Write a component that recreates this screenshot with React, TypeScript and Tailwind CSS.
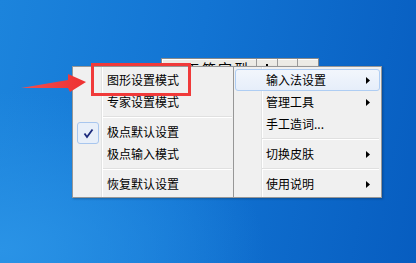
import React from "react";

type Item = { label: string; sub?: boolean; checked?: boolean; active?: boolean } | "sep";

const leftItems: Item[] = [
  { label: "图形设置模式" },
  { label: "专家设置模式" },
  "sep",
  { label: "极点默认设置", checked: true },
  { label: "极点输入模式" },
  "sep",
  { label: "恢复默认设置" },
];

const rightItems: Item[] = [
  { label: "输入法设置", sub: true, active: true },
  { label: "管理工具", sub: true },
  { label: "手工造词..." },
  "sep",
  { label: "切换皮肤", sub: true },
  "sep",
  { label: "使用说明", sub: true },
];

function Arrow() {
  return (
    <svg width="4" height="7" viewBox="0 0 4 7" className="shrink-0">
      <path d="M0 0 L4 3.5 L0 7 Z" fill="#000" />
    </svg>
  );
}

function Check() {
  return (
    <div className="absolute left-[2px] top-0 flex h-[22px] w-[22px] items-center justify-center rounded-[3px] border border-[#a8c6ee] bg-[#e8eff9]">
      <svg width="11" height="11" viewBox="0 0 11 11">
        <path d="M1.5 5.5 L4 9 L9.5 1.5" fill="none" stroke="#1c2a7c" strokeWidth="1.8" />
      </svg>
    </div>
  );
}

function Menu({ items, textPad, sepPad, gutter }: { items: Item[]; textPad: string; sepPad: string; gutter: string }) {
  return (
    <div className={`flex flex-col border border-[#979797] px-px py-[2px] ${gutter}`}>
      {items.map((it, i) =>
        it === "sep" ? (
          <div key={i} className={`flex h-[8px] items-center ${sepPad}`}>
            <div className="h-[2px] w-full border-t border-b border-t-[#e0e0e0] border-b-white" />
          </div>
        ) : (
          <div
            key={i}
            className={`relative flex h-[22px] items-center justify-between pr-[9px] ${textPad} ${
              it.active ? "rounded-[3px] border border-[#aecdf3] bg-[linear-gradient(#f2f6fc,#e6eefa)]" : "border border-transparent"
            }`}
          >
            {it.checked && <Check />}
            <span className="text-[12px] leading-[22px] text-black">{it.label}</span>
            {it.sub && <Arrow />}
          </div>
        )
      )}
    </div>
  );
}

export default function App() {
  return (
    <div
      className="relative h-[263px] w-[416px] overflow-hidden bg-[radial-gradient(ellipse_at_0%_95%,#2a93e6_0%,transparent_45%),linear-gradient(100deg,#1c84dc_0%,#1274d3_45%,#075dc0_100%)]"
      style={{ fontFamily: '"Noto Sans CJK SC", "Noto Sans", sans-serif' }}
    >
      {/* IME status bar, mostly hidden behind the menu */}
      <div className="absolute left-[161px] top-[58px] flex h-[9px] w-[158px] overflow-hidden border-x border-t border-[#8a8a8a] bg-[#ecebe6] shadow-[inset_1px_1px_0_#fff] text-black">
        <div className="flex w-[95px] items-start border-r border-[#9a9a9a] pl-[11px] pt-[1px]">
          <div className="mt-[3px] h-[10px] w-[10px] shrink-0 bg-[#e02020]" />
          <span className="ml-[3px] text-[14px] leading-[16px] tracking-[2px]">五笔字型</span>
        </div>
        <div className="flex w-[21px] justify-center border-r border-[#9a9a9a] pt-[5px]">
          <div className="h-[2px] w-[2px] bg-black" />
        </div>
        <div className="w-[20px] border-r border-[#9a9a9a]" />
        <div className="flex-1" />
      </div>

      {/* context menu */}
      <div className="absolute left-[72px] top-[66px] flex bg-[#f0f0f0] shadow-[1px_1px_2px_rgba(0,0,0,0.25)]">
        <div className="w-[162px]">
          <Menu
            items={leftItems}
            textPad="pl-[32px]"
            sepPad="pl-[29px]"
            gutter="bg-[linear-gradient(to_right,#f0f0f0_28px,#e2e3e3_28px,#e2e3e3_29px,#fff_29px,#fff_30px,#f0f0f0_30px)]"
          />
        </div>
        <div className="-ml-px w-[149px]">
          <Menu
            items={rightItems}
            textPad="pl-[30px]"
            sepPad="pl-[27px] pr-px"
            gutter="bg-[linear-gradient(to_right,#f0f0f0_27px,#e2e3e3_27px,#e2e3e3_28px,#fff_28px,#fff_29px,#f0f0f0_29px)]"
          />
        </div>
      </div>

      {/* annotation */}
      <div className="absolute left-[91px] top-[63px] h-[33px] w-[100px] border-[3px] border-[#f03a3a]" />
      <svg className="absolute left-0 top-0" width="100" height="110" viewBox="0 0 100 110">
        <defs>
          <linearGradient id="ar" x1="0" x2="1" y1="0" y2="0">
            <stop offset="0" stopColor="#f25050" />
            <stop offset="1" stopColor="#ee3030" />
          </linearGradient>
        </defs>
        <path d="M21 88 L68 80 L68 74 L86 82 L70 92 L68 88 Z" fill="url(#ar)" />
      </svg>
    </div>
  );
}
